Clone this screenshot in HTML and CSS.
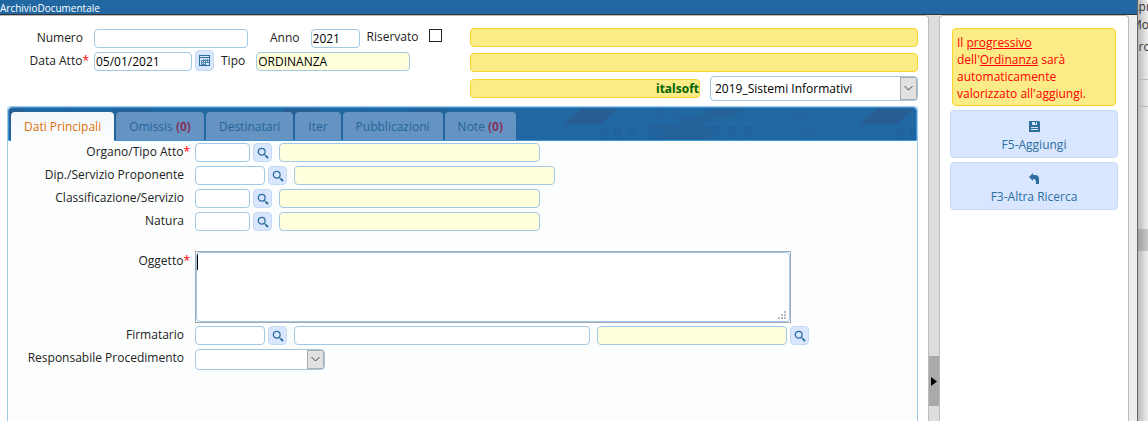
FILE: index.html
```html
<!DOCTYPE html>
<html lang="it">
<head>
    <meta charset="UTF-8">
    <meta name="viewport" content="width=device-width, initial-scale=1.0">
    <title>ArchivioDocumentale</title>
    <link rel="stylesheet" href="styles.css">
</head>
<body>
    <svg class="sprite" aria-hidden="true">
        <symbol id="lens" viewBox="0 0 12 12">
            <circle cx="4.7" cy="4.7" r="3.4" fill="none" stroke="#2e6e9e" stroke-width="1.3"/>
            <path d="M7.3 7.3L8.6 8.6" stroke="#2e6e9e" stroke-width="1.2"/>
            <path d="M8.6 8.6L11 11" stroke="#2e6e9e" stroke-width="2"/>
        </symbol>
    </svg>

    <div class="window">
        <div class="titlebar">ArchivioDocumentale</div>

        <div class="panes">
            <main class="pane pane-main">
                <div class="testata">
                    <div class="testata-left">
                        <div class="row">
                            <label class="lbl" for="numero">Numero</label>
                            <input type="text" id="numero" class="field w-154">
                            <label class="lbl-anno" for="anno">Anno</label>
                            <input type="text" id="anno" class="field w-49" value="2021">
                            <label class="lbl-riservato" for="riservato">Riservato</label>
                            <input type="checkbox" id="riservato" class="check">
                        </div>
                        <div class="row">
                            <label class="lbl required" for="data">Data Atto</label>
                            <input type="text" id="data" class="field w-98" value="05/01/2021">
                            <button type="button" class="icon-btn calendar" aria-label="Calendario">
                                <svg width="11" height="11" viewBox="0 0 11 11">
                                    <path fill="#2e6e9e" fill-rule="evenodd" d="M0 0h11v11H0zM1 1h9v1H1zM1 3h9v7H1z"/>
                                    <path fill="#2e6e9e" opacity=".8" d="M4 4h1v6H4zM6 4h1v6H6zM8 4h1v4H8zM2 5h8v1H2zM2 7h8v1H2zM2 9h5v1H2zM2 5h1v5H2z"/>
                                </svg>
                            </button>
                            <label class="lbl-tipo" for="tipo">Tipo</label>
                            <input type="text" id="tipo" class="field readonly w-154" value="ORDINANZA" readonly>
                        </div>
                    </div>
                    <div class="testata-right">
                        <div class="info"></div>
                        <div class="info"></div>
                        <div class="row-ente">
                            <div class="info info-ente">italsoft</div>
                            <select class="select select-ente" aria-label="Ufficio">
                                <option>2019_Sistemi Informativi</option>
                            </select>
                        </div>
                    </div>
                </div>

                <div class="tabs">
                    <div class="tab-bar">
                        <svg class="skyline" aria-hidden="true" width="100%" height="32">
                            <defs>
                                <pattern id="case" width="296" height="32" patternUnits="userSpaceOnUse">
                                    <path fill="#285d92" opacity=".8" d="M277 1h19v15h-38zM0 1h17L0 16z"/>
                                    <path fill="#285d92" opacity=".5" d="M77 10h30v8h12l-10 13H60L43 17h34zM93 10l16-9h34l-10 9z"/>
                                    <path fill="#1e639f" opacity=".7" d="M-1 20h8v12h-8zM13 20h8v12h-8zM27 20h8v12h-8zM47 26a7 7 0 0 1 14 0v6H47zM112 17h7v14h-7zM128 17h7v14h-7zM144 17h7v14h-7z"/>
                                    <path fill="#285d92" opacity=".3" d="M56 1h7v7h-7zM70 1h7v7h-7zM190 1h5v12h-5zM200 1h5v12h-5zM202 22a5 5 0 0 1 10 0v8h-10z"/>
                                    <path fill="#2468a3" d="M102 15h65v3h-65zM200 16h44v4h-44z"/>
                                </pattern>
                            </defs>
                            <rect width="100%" height="32" fill="url(#case)"/>
                        </svg>
                        <button type="button" class="tab active">Dati Principali</button>
                        <button type="button" class="tab">Omissis <b>(0)</b></button>
                        <button type="button" class="tab">Destinatari</button>
                        <button type="button" class="tab">Iter</button>
                        <button type="button" class="tab">Pubblicazioni</button>
                        <button type="button" class="tab">Note <b>(0)</b></button>
                    </div>

                    <div class="tab-panel">
                        <div class="row">
                            <label class="lbl required" for="organo">Organo/Tipo Atto</label>
                            <input type="text" id="organo" class="field w-55">
                            <button type="button" class="icon-btn" aria-label="Cerca organo"><svg width="12" height="12"><use href="#lens"/></svg></button>
                            <input type="text" class="field readonly w-261" aria-label="Descrizione organo" readonly>
                        </div>
                        <div class="row">
                            <label class="lbl" for="servizio">Dip./Servizio Proponente</label>
                            <input type="text" id="servizio" class="field w-70">
                            <button type="button" class="icon-btn" aria-label="Cerca servizio"><svg width="12" height="12"><use href="#lens"/></svg></button>
                            <input type="text" class="field readonly w-261" aria-label="Descrizione servizio" readonly>
                        </div>
                        <div class="row">
                            <label class="lbl" for="classificazione">Classificazione/Servizio</label>
                            <input type="text" id="classificazione" class="field w-55">
                            <button type="button" class="icon-btn" aria-label="Cerca classificazione"><svg width="12" height="12"><use href="#lens"/></svg></button>
                            <input type="text" class="field readonly w-261" aria-label="Descrizione classificazione" readonly>
                        </div>
                        <div class="row">
                            <label class="lbl" for="natura">Natura</label>
                            <input type="text" id="natura" class="field w-55">
                            <button type="button" class="icon-btn" aria-label="Cerca natura"><svg width="12" height="12"><use href="#lens"/></svg></button>
                            <input type="text" class="field readonly w-261" aria-label="Descrizione natura" readonly>
                        </div>
                        <div class="row row-oggetto">
                            <label class="lbl required" for="oggetto">Oggetto</label>
                            <div class="area">
                                <textarea id="oggetto"></textarea>
                                <svg class="grip" width="8" height="8" viewBox="0 0 8 8" fill="#b8b8b8" aria-hidden="true">
                                    <path d="M6 0h2v2H6zM3 3h2v2H3zM6 3h2v2H6zM0 6h2v2H0zM3 6h2v2H3zM6 6h2v2H6z"/>
                                </svg>
                            </div>
                        </div>
                        <div class="row">
                            <label class="lbl" for="firmatario">Firmatario</label>
                            <input type="text" id="firmatario" class="field w-70">
                            <button type="button" class="icon-btn" aria-label="Cerca firmatario"><svg width="12" height="12"><use href="#lens"/></svg></button>
                            <input type="text" class="field w-296" aria-label="Nome firmatario">
                            <input type="text" class="field readonly ruolo w-190" aria-label="Ruolo firmatario" readonly>
                            <button type="button" class="icon-btn" aria-label="Cerca ruolo"><svg width="12" height="12"><use href="#lens"/></svg></button>
                        </div>
                        <div class="row">
                            <label class="lbl" for="responsabile">Responsabile Procedimento</label>
                            <select id="responsabile" class="select select-resp">
                                <option></option>
                            </select>
                        </div>
                    </div>
                </div>
            </main>

            <div class="splitter">
                <button type="button" class="toggler" aria-label="Chiudi pannello">
                    <svg width="6" height="9" viewBox="0 0 6 9"><path d="M0 0L6 4.5L0 9z"/></svg>
                </button>
            </div>

            <aside class="pane pane-side">
                <div class="avviso">Il <u>progressivo</u> dell'<u>Ordinanza</u> sarà automaticamente valorizzato all'aggiungi.</div>
                <button type="button" class="action">
                    <svg width="11" height="11" viewBox="0 0 11 11">
                        <path fill="#2e6e9e" fill-rule="evenodd" d="M0 0h10l1 1v10H0zM3 1v3h5V1zM2 6v4h7V6z"/>
                        <path fill="#2e6e9e" d="M6 1h1v2H6zM2 7h7v1H2zM2 9h7v1H2z"/>
                    </svg>
                    F5-Aggiungi
                </button>
                <button type="button" class="action">
                    <svg width="11" height="11" viewBox="0 0 11 11">
                        <path fill="#2e6e9e" d="M4 0v2h2c3 0 4 2 4 4v5H7c0-3 0-5-3-5v2L0 4z"/>
                    </svg>
                    F3-Altra Ricerca
                </button>
            </aside>
        </div>
    </div>

    <div class="behind">
        <div class="behind-menu">
            <span>Apri</span>
            <span>Mod</span>
            <span>Cro</span>
        </div>
        <div class="behind-bar"></div>
        <div class="behind-body"></div>
    </div>
</body>
</html>
```
FILE: styles.css
```css
* {
    box-sizing: border-box;
}

body {
    margin: 0;
    height: 100vh;
    display: flex;
    overflow: hidden;
    background-color: #ededed;
    font-family: "Open Sans", "Noto Sans", sans-serif;
    font-size: 12px;
    color: #222;
}

input, select, textarea, button {
    font: inherit;
    margin: 0;
}

.sprite {
    position: absolute;
    width: 0;
    height: 0;
}

/* finestra */
.window {
    flex: 1;
    display: flex;
    flex-direction: column;
    border-right: 1px solid #666;
}

.titlebar {
    height: 15px;
    line-height: 17px;
    background-color: #2168a2;
    border-bottom: 1px solid #333;
    color: #fff;
    font-size: 10px;
}

.panes {
    flex: 1;
    display: flex;
    padding-right: 8px;
}

.pane {
    background-color: #fff;
    border: 1px solid #bbb;
    border-bottom: 0;
}

.pane-main {
    flex: 1;
    display: flex;
    flex-direction: column;
    padding: 12px 10px 0 7px;
    border-left: 0;
    border-radius: 0 4px 0 0;
}

.pane-side {
    width: 190px;
    padding: 12px 10px 0;
    border-radius: 4px 4px 0 0;
}

.splitter {
    width: 10px;
    background-color: #ddd;
}

.toggler {
    width: 10px;
    height: 50px;
    margin-top: 341px;
    padding: 0 0 0 2px;
    border: 0;
    background-color: #aaa;
    display: flex;
    align-items: center;
}

/* campi */
.row {
    display: flex;
    align-items: flex-start;
    margin-bottom: 4px;
}

.lbl {
    width: 187px;
    flex-shrink: 0;
    text-align: right;
    line-height: 18px;
    padding-right: 11px;
}

.required {
    padding-right: 5px;
}

.required::after {
    content: "*";
    color: #f00;
}

.field {
    height: 19px;
    padding: 0 1px;
    border: 1px solid #a2c8e4;
    border-radius: 4px;
    background-color: #fff;
    color: #000;
}

.readonly {
    background-color: #ffffde;
}

.w-49 { width: 49px; }
.w-55 { width: 55px; }
.w-70 { width: 70px; }
.w-98 { width: 98px; }
.w-154 { width: 154px; }
.w-190 { width: 190px; }
.w-261 { width: 261px; }
.w-296 { width: 296px; }

.icon-btn {
    width: 19px;
    height: 19px;
    margin: 0 7px 0 3px;
    padding: 0;
    display: flex;
    align-items: center;
    justify-content: center;
    border: 1px solid #c5daf0;
    border-radius: 4px;
    background-color: #d8e6ff;
}

.ruolo {
    margin-left: 7px;
}

/* freccia, bordo e fondo del pulsante della tendina */
.select {
    appearance: none;
    border: 1px solid #a2c8e4;
    border-radius: 4px;
    padding: 0 20px 0 4px;
    color: #000;
    background-color: #fff;
    background-image: url("data:image/svg+xml,%3Csvg xmlns='http://www.w3.org/2000/svg' width='17' height='9'%3E%3Cpath d='M4.5 2l4 4 4-4' fill='none' stroke='%23444'/%3E%3C/svg%3E"), linear-gradient(#e1e1e1, #e1e1e1), linear-gradient(#adadad, #adadad);
    background-position: right center, right 1px center, right center;
    background-size: 17px 9px, 15px calc(100% - 2px), 17px 100%;
    background-repeat: no-repeat;
}

/* testata */
.testata {
    display: flex;
    margin-bottom: 5px;
}

.testata-left {
    width: 463px;
    padding-top: 1px;
}

.testata-left .lbl {
    width: 87px;
}

.lbl-anno {
    margin: 0 11px 0 22px;
    line-height: 18px;
}

.lbl-riservato {
    margin: 0 10px 0 7px;
    line-height: 16px;
}

.lbl-tipo {
    margin-right: 11px;
    line-height: 18px;
}

.check {
    appearance: none;
    width: 13px;
    height: 13px;
    border: 1px solid #222;
    background-color: #fff;
}

.calendar {
    height: 21px;
    margin-top: -2px;
}

.testata-right {
    flex: 1;
}

.info {
    height: 19px;
    margin-bottom: 6px;
    border: 1px solid #fad42e;
    border-radius: 4px;
    background-color: #fbec88;
}

.row-ente {
    display: flex;
    align-items: center;
    margin-top: -2px;
}

.info-ente {
    width: 230px;
    margin: 0 10px 0 0;
    line-height: 17px;
    text-align: right;
    font-weight: bold;
    color: #006400;
}

.select-ente {
    flex: 1;
    height: 25px;
}

/* schede */
.tabs {
    flex: 1;
    border: 1px solid #a2c8e4;
    border-bottom: 0;
    border-radius: 4px 4px 0 0;
    background-color: #fcfefe;
}

.tab-bar {
    position: relative;
    display: flex;
    gap: 2px;
    padding: 4px 2px 0;
    border: 1px solid #3f94d6;
    border-radius: 4px 4px 0 0;
    background-color: #2168a2;
}

.skyline {
    position: absolute;
    top: 0;
    left: 0;
}

.tab {
    position: relative;
    height: 28px;
    padding: 0 13px;
    border: 0;
    border-radius: 4px 4px 0 0;
    background-color: #6594c3;
    color: #266498;
}

.tab b {
    color: #82335c;
}

.tab.active {
    margin-bottom: -1px;
    height: 29px;
    background: linear-gradient(#f2f6fa, #fcfefe);
    color: #e17009;
}

.tab-panel {
    padding-top: 2px;
}

.row-oggetto {
    margin: 20px 0 3px;
}

.row-oggetto .lbl {
    line-height: 20px;
}

.area {
    position: relative;
    display: flex;
    width: 596px;
    height: 72px;
    border: 1px solid #a3a9b5;
    background-color: #fff;
}

.area textarea {
    flex: 1;
    resize: none;
    outline: none;
    border: 1px solid #a2c8e4;
    border-radius: 4px;
    background: #fff linear-gradient(#000, #000) 0 0 / 1px 17px no-repeat;
}

.grip {
    position: absolute;
    right: 4px;
    bottom: 3px;
}

.select-resp {
    width: 130px;
    height: 21px;
}

/* pannello azioni */
.avviso {
    margin: 0 2px 4px;
    padding: 5px 4px 3px;
    border: 1px solid #fad42e;
    border-radius: 4px;
    background-color: #fbec88;
    color: #f00;
    line-height: 17px;
}

.action {
    width: 100%;
    height: 48px;
    margin-bottom: 4px;
    padding: 5px 0 0;
    display: flex;
    flex-direction: column;
    align-items: center;
    justify-content: center;
    gap: 4px;
    border: 1px solid #c5daf0;
    border-radius: 4px;
    background-color: #d8e6ff;
    color: #2e6e9e;
}

/* finestra sullo sfondo */
.behind {
    width: 10px;
    overflow: hidden;
    background: linear-gradient(90deg, #bbb, #eee);
}

.behind-menu {
    display: flex;
    flex-direction: column;
    height: 79px;
    margin-left: -7px;
    color: #333;
    line-height: 22px;
}

.behind-menu span:first-child {
    line-height: 14px;
}

.behind-bar {
    height: 28px;
    border-top: 1px solid #bbb;
    border-bottom: 1px solid #bbb;
}

.behind-body {
    height: 22px;
    margin-top: 122px;
    background-color: rgba(0, 0, 0, 0.15);
}
```
